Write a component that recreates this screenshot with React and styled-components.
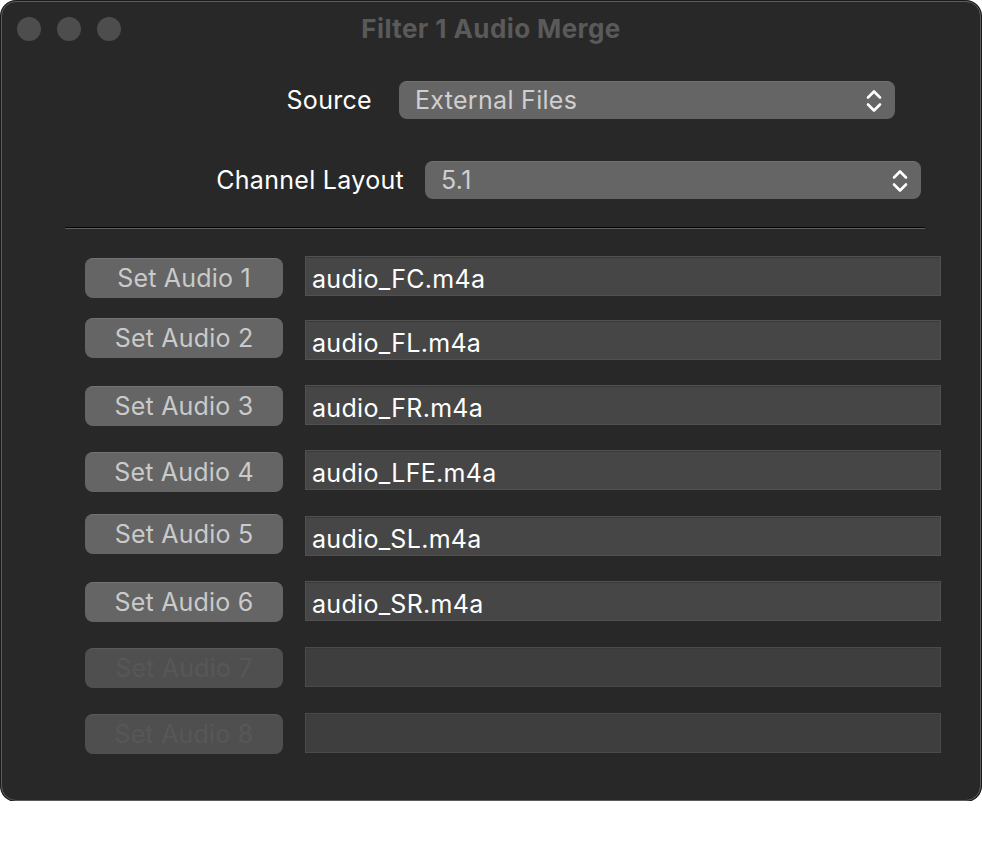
import React from "react";
import styled, { createGlobalStyle } from "styled-components";

const Global = createGlobalStyle`
  html, body { margin: 0; padding: 0; background: #ffffff; }
  body { font-family: Inter, "Noto Sans", "Liberation Sans", sans-serif; }
`;

const Window = styled.div`
  box-sizing: border-box;
  margin: 1px 0 0 1px;
  width: 980px;
  height: 800px;
  background: #282828;
  border: 1px solid #5c5c5c;
  border-radius: 15px;
  box-shadow: 0 0 0 1px #1a1a1a;
  display: flex;
  flex-direction: column;
  overflow: hidden;
`;

const TitleBar = styled.div`
  height: 54px;
  display: grid;
  grid-template-columns: 1fr auto 1fr;
  align-items: center;
`;

const Lights = styled.div`
  display: flex;
  gap: 16px;
  padding-left: 15px;
`;

const Light = styled.span`
  width: 24px;
  height: 24px;
  border-radius: 50%;
  background: #4d4d4d;
`;

const Title = styled.div`
  font-size: 26px;
  font-weight: 700;
  color: #5a5a5a;
  letter-spacing: 0.4px;
  margin-top: -2px;
`;

const Body = styled.div`
  display: flex;
  flex-direction: column;
`;

const FormRow = styled.div`
  display: grid;
  grid-template-columns: ${(p) => p.$labelEnd}px 496px;
  column-gap: ${(p) => p.$gap}px;
  align-items: center;
  margin-top: ${(p) => p.$mt}px;
  height: 38px;
`;

const Label = styled.label`
  justify-self: end;
  font-size: 25px;
  color: #ffffff;
  letter-spacing: 0.3px;
`;

const Select = styled.div`
  box-sizing: border-box;
  height: 38px;
  border-radius: 8px;
  background: #656565;
  border-top: 1px solid #727272;
  display: flex;
  align-items: center;
  justify-content: space-between;
  padding: 0 13px 0 16px;
  font-size: 25px;
  letter-spacing: 0.3px;
  color: #cfcfcf;
`;

const SelectText = styled.span`
  margin-top: -2px;
`;

const Separator = styled.div`
  margin: 28px 0 0 63px;
  width: 860px;
  height: 1px;
  background: #050505;
  border-bottom: 1px solid #5f5f5f;
`;

const AudioRow = styled.div`
  display: flex;
  align-items: flex-start;
  gap: 22px;
  margin-left: 83px;
  margin-top: ${(p) => p.$mt}px;
  height: 40px;
`;

const SetButton = styled.button`
  box-sizing: border-box;
  width: 198px;
  height: 40px;
  margin-top: ${(p) => p.$shift}px;
  border: none;
  border-top: 1px solid ${(p) => (p.disabled ? "#5a5a5a" : "#737373")};
  border-radius: 8px;
  background: ${(p) => (p.disabled ? "#4f4f4f" : "#656565")};
  color: ${(p) => (p.disabled ? "#575757" : "#cacaca")};
  font-family: inherit;
  font-size: 25px;
  letter-spacing: 0.2px;
  padding: 0 0 2px;
`;

const FileField = styled.div`
  box-sizing: border-box;
  width: 636px;
  height: 40px;
  background: ${(p) => (p.$empty ? "#3e3e3e" : "#464646")};
  border: 1px solid ${(p) => (p.$empty ? "#4b4b4b" : "#515151")};
  box-shadow: inset 0 1px 0 #3a3a3a;
  display: flex;
  align-items: center;
  padding: 5px 0 0 6px;
  font-size: 25px;
  letter-spacing: 0.3px;
  color: #ffffff;
`;

const Chevrons = () => (
  <svg width="16" height="24" viewBox="0 0 16 24" fill="none">
    <path
      d="M2 8.5 L8 2.5 L14 8.5 M2 15.5 L8 21.5 L14 15.5"
      stroke="#ffffff"
      strokeWidth="2.6"
      strokeLinecap="round"
      strokeLinejoin="round"
    />
  </svg>
);

const channels = [
  { label: "Set Audio 1", file: "audio_FC.m4a", mt: 27, shift: 2 },
  { label: "Set Audio 2", file: "audio_FL.m4a", mt: 24, shift: -2 },
  { label: "Set Audio 3", file: "audio_FR.m4a", mt: 25, shift: 1 },
  { label: "Set Audio 4", file: "audio_LFE.m4a", mt: 25, shift: 2 },
  { label: "Set Audio 5", file: "audio_SL.m4a", mt: 26, shift: -2 },
  { label: "Set Audio 6", file: "audio_SR.m4a", mt: 25, shift: 1 },
  { label: "Set Audio 7", file: "", mt: 26, shift: 1 },
  { label: "Set Audio 8", file: "", mt: 26, shift: 1 },
];

export default function App() {
  return (
    <>
      <Global />
      <Window>
        <TitleBar>
          <Lights>
            <Light />
            <Light />
            <Light />
          </Lights>
          <Title>Filter 1 Audio Merge</Title>
          <span />
        </TitleBar>
        <Body>
          <FormRow $labelEnd={370} $gap={27} $mt={25}>
            <Label>Source</Label>
            <Select>
              <SelectText>External Files</SelectText>
              <Chevrons />
            </Select>
          </FormRow>
          <FormRow $labelEnd={402} $gap={21} $mt={42}>
            <Label>Channel Layout</Label>
            <Select>
              <SelectText>5.1</SelectText>
              <Chevrons />
            </Select>
          </FormRow>
          <Separator />
          {channels.map((c) => (
            <AudioRow key={c.label} $mt={c.mt}>
              <SetButton disabled={!c.file} $shift={c.shift}>
                {c.label}
              </SetButton>
              <FileField $empty={!c.file}>{c.file}</FileField>
            </AudioRow>
          ))}
        </Body>
      </Window>
    </>
  );
}
